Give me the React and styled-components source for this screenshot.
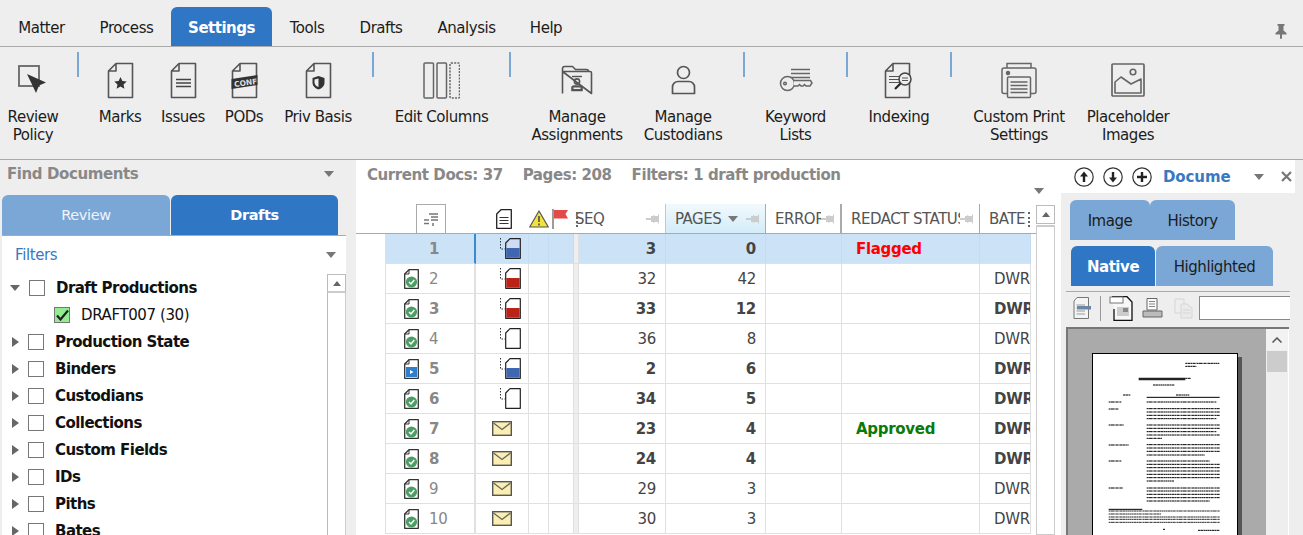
import React from "react";
import styled, { createGlobalStyle } from "styled-components";

const Global = createGlobalStyle`
  html, body { margin: 0; padding: 0; background: #fff; }
  * { box-sizing: border-box; }
`;

const FONT = `"DejaVu Sans", Verdana, sans-serif`;

const Page = styled.div`
  width: 1303px; height: 535px; overflow: hidden; display: flex; flex-direction: column;
  font-family: ${FONT}; font-size: 15px; color: #222; background: #eee;
`;

/* ---------- top tabs ---------- */
const TabBar = styled.div`
  height: 47px; flex: none; display: flex; align-items: flex-end; padding-left: 1px;
  border-bottom: 1px solid #aaa; background: #eee; position: relative;
`;
const TopTab = styled.div`
  width: ${p => p.$w}px; height: 39px; display: flex; align-items: center; justify-content: center;
  padding-top: 3px; letter-spacing: -0.45px; color: #1c1c1c;
  ${p => p.$active && `background:#2f76c4;color:#fff;font-weight:700;border-radius:6px 6px 0 0;letter-spacing:-0.5px;padding-top:2px;`}
`;
const PinSlot = styled.div`margin-left: auto; padding: 0 16px 7px 0; display: flex;`;

/* ---------- ribbon ---------- */
const Ribbon = styled.div`
  height: 113px; flex: none; display: flex; align-items: flex-start;
  border-bottom: 1px solid #aaa; background: #eee;
`;
const RibbonItem = styled.div`
  width: ${p => p.$w}px; flex: none; padding-top: 13px; display: flex; flex-direction: column; align-items: center;
`;
const IconBox = styled.div`height: 40px; display: flex; align-items: center; justify-content: center;`;
const RibbonLabel = styled.div`
  margin-top: 8px; text-align: center; line-height: 18px; white-space: nowrap; letter-spacing: -0.45px; color: #1c1c1c;
`;
const Sep = styled.div`
  width: 2px; height: 25px; flex: none; margin-top: 5px; margin-left: ${p => p.$ml || 0}px; background: #7ba7d6;
`;

/* ---------- main ---------- */
const Main = styled.div`flex: 1; min-height: 0; display: flex;`;

const LeftPanel = styled.div`width: 356px; flex: none; display: flex; flex-direction: column; background: #eee;`;
const PanelHead = styled.div`
  height: 35px; flex: none; display: flex; align-items: center; justify-content: space-between;
  padding: 0 22px 7px 7px; font-weight: 700; color: #888; letter-spacing: -0.4px;
`;
const Caret = styled.span`
  display: inline-block; width: 0; height: 0; border-left: 5px solid transparent; border-right: 5px solid transparent;
  border-top: 6px solid ${p => p.$c || "#777"};
`;
const SideTabs = styled.div`display: flex; height: 40px; flex: none; padding-left: 2px;`;
const SideTab = styled.div`
  width: ${p => p.$w}px; display: flex; align-items: center; justify-content: center;
  border-radius: 6px 6px 0 0; color: #fff; background: ${p => p.$active ? "#2f76c4" : "#7ba7d6"};
  font-weight: ${p => p.$active ? 700 : 400}; letter-spacing: -0.4px; margin-right: 1px; font-size: 14.5px;
  ${p => !p.$active && `color:#eef4fb;`}
`;
const FilterBox = styled.div`
  margin-left: 2px; width: 344px; flex: 1; min-height: 0; background: #fff; border-top: 1px solid #aaa;
  display: flex; flex-direction: column;
`;
const FilterHead = styled.div`
  height: 38px; flex: none; display: flex; align-items: center; justify-content: space-between;
  padding: 0 10px 0 13px; color: #3a78c2; letter-spacing: -0.4px;
`;
const TreeWrap = styled.div`display: flex; flex: 1; min-height: 0; overflow: hidden;`;
const Tree = styled.div`flex: 1; min-width: 0;`;
const TreeRow = styled.div`
  height: 27px; display: flex; align-items: center; padding-left: ${p => p.$child ? 52 : 9}px;
  font-weight: ${p => p.$child ? 400 : 700}; letter-spacing: ${p => p.$child ? "-0.4px" : "-0.55px"}; color: #111; white-space: nowrap;
`;
const Arrow = styled.span`
  width: 8px; height: 12px; flex: none; display: flex; align-items: center;
  ${p => p.$open
    ? `width:10px;height:0;border-left:5px solid transparent;border-right:5px solid transparent;border-top:6px solid #666;margin-left:-1px;`
    : `width:0;height:0;border-top:5px solid transparent;border-bottom:5px solid transparent;border-left:7px solid #666;margin-left:1px;`}
`;
const Check = styled.span`
  width: 16px; height: 16px; flex: none; margin-left: ${p => p.$child ? 0 : 9}px; margin-right: 11px;
  border: 1px solid #777; background: ${p => p.$on ? "#90ee90" : "#fff"}; display: flex; align-items: center; justify-content: center;
`;
const VScroll = styled.div`
  width: ${p => p.$w || 20}px; flex: none; display: flex; flex-direction: column;
  border-left: 1px solid #bbb; border-right: 1px solid #ccc; background: #fff; margin-top: ${p => p.$mt || 0}px;
`;
const ScrollBtn = styled.div`
  height: 19px; flex: none; display: flex; align-items: center; justify-content: center; border: 1px solid #bbb; margin: 0 -1px 0 -1px; border-bottom: 2px solid #ccc;
`;
const UpTri = styled.span`
  width: 0; height: 0; border-left: 4px solid transparent; border-right: 4px solid transparent; border-bottom: 5px solid #666;
`;

/* ---------- centre ---------- */
const Centre = styled.div`width: 705px; flex: none; background: #fff; display: flex; flex-direction: column;`;
const Info = styled.div`
  height: 44px; flex: none; display: flex; padding: 6px 0 0 11px; gap: 20px; font-weight: 700; color: #888; letter-spacing: -0.42px; white-space: nowrap; position: relative;
`;
const InfoCaret = styled.div`position: absolute; right: 17px; top: 20px;`;
const TableWrap = styled.div`flex: 1; min-height: 0; display: flex; overflow: hidden;`;
const Table = styled.div`width: 680px; flex: none;`;

const COLS = "29px 91px 53px 20px 25px 5px 87px 100px 76px 138px 51px";

const HeadRow = styled.div`
  display: grid; grid-template-columns: ${COLS}; height: 30px; border-bottom: 1px solid #aaa;
`;
const HeadCell = styled.div`
  grid-column: span ${p => p.$span || 1}; display: flex; align-items: center; justify-content: space-between; position: relative; min-width: 0;
  padding: 0 5px 0 ${p => p.$pl ?? 10}px; color: #555; letter-spacing: -0.5px; white-space: nowrap; overflow: hidden;
  border-right: ${p => p.$br ?? "1px solid #aaa"};
  ${p => p.$sorted && `background: linear-gradient(#f1f9fd, #d3ecf8); border-right-color:#aaa;`}
`;
const HeadIcon = styled.div`display: flex; align-items: center; justify-content: ${p => p.$j || "center"}; padding-left: ${p => p.$pl || 0}px; height: 29px;`;
const HeadText = styled.span`overflow: hidden; flex: 1; min-width: 0; display: block;`;
const Grip = styled.span`
  position: absolute; ${p => p.$right ? "right: 1px" : "left: 2px"}; top: 8px; width: 2px; height: 15px; border-left: 2px dotted #666;
`;
const CornerBtn = styled.div`
  width: 30px; height: 29px; margin-left: 31px; border: 1px solid #aaa; border-bottom: 0; display: flex; align-items: center; justify-content: center;
`;
const Row = styled.div`display: grid; grid-template-columns: ${COLS}; height: 30px;`;
const Blank = styled.div``;
const Cell = styled.div`
  display: flex; align-items: center; min-width: 0; overflow: hidden; white-space: nowrap; position: relative;
  border-right: ${p => p.$sel ? "1px solid #c4dcf2" : "1px solid #e0e0e0"};
  border-bottom: 1px solid #e0e0e0;
  background: ${p => p.$sel ? "#cce3f7" : p.$gap ? "#eee" : "#fff"};
  justify-content: ${p => p.$j || "flex-start"};
  padding: ${p => p.$pad || "0"};
  color: #444; letter-spacing: -0.3px;
  font-weight: ${p => p.$bold ? 700 : 400};
`;
const RowHead = styled(Cell)`
  border-left: 1px solid #e0e0e0; padding-left: 18px; gap: 10px; color: #888;
  border-right: ${p => p.$sel ? "2px solid #3a8ad0" : "2px solid #e0e0e0"};
`;
const RowNum = styled.span`display: inline-block; ${p => p.$indent && "margin-left: 25px;"}`;
const Status = styled.span`font-weight: 700; color: ${p => p.$c}; letter-spacing: -0.3px;`;
const TableScroll = styled.div`width: 19px; flex: none; margin-left: 0; margin-top: 1px; display: flex; flex-direction: column;`;
const TSBtn = styled.div`height: 19px; border: 1px solid #bbb; display: flex; align-items: center; justify-content: center; flex: none;`;
const TSTrack = styled.div`flex: 1; margin-top: 1px; border: 1px solid #ccc; border-top: 2px solid #ccc;`;

/* ---------- right ---------- */
const RightPanel = styled.div`width: 242px; flex: none; display: flex; flex-direction: column; background: #eee;`;
const RightHead = styled.div`
  height: 33px; width: 234px; flex: none; background: #fff; display: flex; align-items: center; padding-left: 13px; gap: 9px;
`;
const DocTitle = styled.div`font-weight: 700; color: #3a78c2; margin-left: 2px; width: 82px; letter-spacing: -0.1px; overflow: hidden;`;
const CloseX = styled.div`margin-left: 8px; display: flex;`;
const TabLine = styled.div`display: flex; height: 40px; flex: none; margin-top: ${p => p.$mt}px; padding-left: ${p => p.$pl}px;`;
const ViewTab = styled.div`
  width: ${p => p.$w}px; display: flex; align-items: center; justify-content: center; flex: none; letter-spacing: -0.45px;
  border-radius: 6px 6px 0 0; margin-right: ${p => p.$mr || 0}px; padding-top: 2px;
  background: ${p => p.$active ? "#2f76c4" : "#7ba7d6"}; color: ${p => p.$active ? "#fff" : "#1c1c1c"}; font-weight: ${p => p.$active ? 700 : 400};
`;
const Tools = styled.div`
  height: 36px; flex: none; margin: 5px 13px 0 5px; border-top: 1px solid #aaa; display: flex; align-items: center; padding: 0 0 3px 7px;
`;
const ToolSlot = styled.div`display: flex; align-items: center; margin-right: ${p => p.$mr || 0}px;`;
const ToolDiv = styled.div`width: 1px; height: 25px; background: #999; margin: 0 8px 0 9px;`;
const ToolInput = styled.div`flex: 1; height: 24px; background: #fff; border: 1px solid #888; border-right: 0; margin-left: 5px;`;
const Viewer = styled.div`flex: 1; min-height: 0; margin: 0 14px 0 5px; display: flex; border-top: 2px solid #777; overflow: hidden;`;
const ViewerCanvas = styled.div`
  flex: 1; background: #aaa; border-left: 2px solid #777; padding: 24px 0 0 24px; overflow: hidden;
`;
const DocPage = styled.div`
  width: 146px; height: 210px; background: #fff; border: 1px solid #000; border-width: 1px 1px 0 1px; box-shadow: 4px 4px 0 #555; display: flex;
`;
const ViewerScroll = styled.div`width: 23px; flex: none; background: #eee; border-right: 1px solid #fff; display: flex; flex-direction: column;`;
const VSBtn = styled.div`height: 21px; background: #f2f2f2; display: flex; align-items: center; justify-content: center; flex: none;`;
const VSThumb = styled.div`height: 21px; margin: 1px 1px 0 1px; background: #ccc; flex: none;`;

/* ---------- icons ---------- */
const S = "#555";
const Doc = ({ children }) => (
  <svg width="27" height="37" viewBox="0 0 27 37" fill="none">
    <path d="M9 1.5H25.5V35.5H1.5V9Z M9 1.5V9H1.5" stroke={S} strokeWidth="1.6" strokeLinejoin="round" />
    {children}
  </svg>
);
const ReviewIcon = () => (
  <svg width="30" height="30" viewBox="0 0 30 30" fill="none">
    <rect x="1" y="1" width="20" height="20" stroke="#666" strokeWidth="1.8" fill="#eee" />
    <path d="M9 9L28 17.5L21 20.5L18 28Z" fill="#333" />
  </svg>
);
const MarksIcon = () => <Doc><path d="M13.5 15l1.9 4 4.3.5-3.2 2.9.9 4.3-3.9-2.2-3.9 2.2.9-4.3-3.2-2.9 4.3-.5Z" fill="#333" /></Doc>;
const IssuesIcon = () => <Doc><path d="M6 17.5H21M6 21H21M6 24.5H21" stroke="#444" strokeWidth="1.6" /></Doc>;
const PodsIcon = () => (
  <Doc>
    <path d="M0.5 17L26.5 13V23L0.5 27Z" fill="#333" />
    <text x="3" y="23.6" fontSize="7.5" fontWeight="700" fill="#ddd" fontFamily={FONT} transform="rotate(-8 13 21)" letterSpacing="0">CONF</text>
  </Doc>
);
const PrivIcon = () => <Doc><path d="M13.5 14l6 2v4.5c0 3.5-2.5 5.8-6 7-3.500-1.200-6-3.500-6-7V16Z" fill="#333" /><path d="M13.5 16.500v8.500c-2.500-1-4-2.500-4-4.800V17.500Z" fill="#eee" /></Doc>;
const ColumnsIcon = () => (
  <svg width="37" height="37" viewBox="0 0 37 37" fill="none" stroke="#666" strokeWidth="1.5">
    <rect x="1" y="1" width="9.500" height="35" rx="1" />
    <rect x="14" y="1" width="9.500" height="35" rx="1" />
    <rect x="27" y="1" width="9.500" height="35" rx="1" strokeDasharray="2 1.200" />
  </svg>
);
const AssignIcon = () => (
  <svg width="32" height="30" viewBox="0 0 32 30" fill="none" stroke="#555" strokeWidth="1.6">
    <path d="M1.500 28.500V3.500a2 2 0 0 1 2-2h8l3 3h11a2 2 0 0 1 2 2M1.500 6.500H29a1.500 1.500 0 0 1 1.500 1.500V28.500Z" strokeLinejoin="round"/>
    <path d="M11 11.500H21" strokeWidth="1.400" />
    <circle cx="16" cy="16.500" r="2.600" />
    <path d="M11 25.500v-2.500a2 2 0 0 1 2-2h6a2 2 0 0 1 2 2v2.500Z" fill="#555" stroke="#555" />
    <rect x="12.500" y="22.500" width="7" height="1.500" fill="#eee" stroke="none" />
  </svg>
);
const PersonIcon = () => (
  <svg width="25" height="30" viewBox="0 0 25 30" fill="none" stroke="#555" strokeWidth="1.7">
    <circle cx="12.500" cy="7.500" r="6" />
    <path d="M1.500 28.500V22a5.500 5.500 0 0 1 5.500-5.500h11a5.500 5.500 0 0 1 5.500 5.500v6.500Z" strokeLinejoin="round" />
  </svg>
);
const KeyIcon = () => (
  <svg width="34" height="25" viewBox="0 0 34 25" fill="none" stroke="#666" strokeWidth="1.500">
    <path d="M12 1.500H31M12 5.500H31M12 9.500H31" />
    <circle cx="8.500" cy="15.500" r="7" fill="#eee" />
    <circle cx="6" cy="15.500" r="1.300" />
    <path d="M15 12.500H31.500L33 15l-2 3H27l-1.500-1.500L24 18h-2l-1.500-1.500L19 18h-4" fill="#eee" />
  </svg>
);
const IndexIcon = () => (
  <svg width="30" height="37" viewBox="0 0 30 37" fill="none">
    <path d="M9 1.500H25.500V35.500H1.500V9Z M9 1.500V9H1.500" stroke={S} strokeWidth="1.600" strokeLinejoin="round" />
    <path d="M5 14.500H19M5 17.500H19M5 20.500H17" stroke="#555" strokeWidth="1.200" />
    <circle cx="21" cy="17" r="6" fill="#eee" stroke="#444" strokeWidth="1.500" />
    <path d="M18 16H24M18 18.500H24" stroke="#555" strokeWidth="1" />
    <path d="M16.500 21.500L11 27" stroke="#222" strokeWidth="2.200" />
  </svg>
);
const PrinterIcon = () => (
  <svg width="36" height="37" viewBox="0 0 36 37" fill="none" stroke="#666" strokeWidth="1.500">
    <path d="M6 6V1.500H30V6" />
    <path d="M6 31.500H3a2 2 0 0 1-2-2V8a2 2 0 0 1 2-2h30a2 2 0 0 1 2 2v21.500a2 2 0 0 1-2 2h-3" />
    <circle cx="7" cy="11" r="1.500" fill="#666" />
    <rect x="6.500" y="15" width="23" height="20.500" rx="1" fill="#eee" />
    <path d="M9.500 20H26.500M9.500 23.500H26.500M9.500 27H26.500M9.500 30.500H26.500" />
  </svg>
);
const ImageIcon = () => (
  <svg width="34" height="34" viewBox="0 0 34 34" fill="none" stroke="#666">
    <rect x="1" y="1" width="32" height="32" rx="1" strokeWidth="1.700" />
    <circle cx="22" cy="9" r="2.800" strokeWidth="1.600" />
    <path d="M4 30V19L10 14L20 21L30 16V30Z" strokeWidth="1.600" strokeLinejoin="round" />
  </svg>
);
const PinTop = () => (
  <svg width="12" height="15" viewBox="0 0 12 15"><path d="M2.500 0H9.500V1.500L8.500 2V6.500L11.500 9V10.500H7V14.500L6 15 5 14.500V10.500H.5V9L3.500 6.500V2L2.500 1.500Z" fill="#777" /></svg>
);
const HPin = () => (
  <svg width="14" height="10" viewBox="0 0 14 10" style={{ flex: "none" }}><path d="M0 4H5V2H7V1L9 2H12V0.500H13V9.500H12V8H9L7 9V8H5V6H0Z" fill="#ccc" /></svg>
);
const CheckMark = () => (
  <svg width="13" height="12" viewBox="0 0 13 12"><path d="M1 6.500L4.500 10.500L12 1.500" fill="none" stroke="#222" strokeWidth="2.200" /></svg>
);
const RowDoc = ({ play }) => (
  <svg width="15" height="20" viewBox="0 0 15 20" style={{ flex: "none" }}>
    <path d="M5 .700H14.300V19.300H.700V5Z" fill="#fff" stroke="#333" strokeWidth="1.300" strokeLinejoin="round" />
    <path d="M5 .700V5H.700" fill="none" stroke="#333" strokeWidth="1" />
    {play ? (
      <>
        <rect x="2" y="8" width="11" height="10" fill="#2f7ec9" />
        <path d="M6 11L9.500 13L6 15Z" fill="#fff" />
      </>
    ) : (
      <>
        <circle cx="7.500" cy="13" r="5.600" fill="#4a9e63" />
        <path d="M5 13L7 15L10.300 11" fill="none" stroke="#fff" strokeWidth="1.500" />
      </>
    )}
  </svg>
);
const FileMark = ({ fill, top }) => (
  <svg width="21" height="21" viewBox="0 0 21 21" style={{ flex: "none" }}>
    <path d="M.500 0V11H5" fill="none" stroke="#333" strokeWidth="1" strokeDasharray="1.500 1.500" />
    <path d="M10 .700H20.300V20.300H5.700V5Z" fill={top || "#fff"} stroke="#222" strokeWidth="1.200" strokeLinejoin="round" />
    {fill && <path d="M6.300 10H19.700V19.700H6.300Z" fill={fill} />}
  </svg>
);
const Envelope = () => (
  <svg width="20" height="15" viewBox="0 0 20 15" style={{ flex: "none" }}>
    <rect x=".700" y=".700" width="18.600" height="13.600" fill="#fbeeb0" stroke="#555" strokeWidth="1.400" />
    <path d="M1.500 2L10 8.500L18.500 2" fill="none" stroke="#666" strokeWidth="1.300" />
  </svg>
);
const HeadDoc = () => (
  <svg width="16" height="20" viewBox="0 0 16 20">
    <path d="M5 .700H15.300V19.300H.700V5Z" fill="#fff" stroke="#222" strokeWidth="1.300" strokeLinejoin="round" />
    <path d="M3.500 8.500H12.500M3.500 11.500H12.500M3.500 14.500H12.500" stroke="#333" strokeWidth="1.200" />
  </svg>
);
const WarnIcon = () => (
  <svg width="20" height="18" viewBox="0 0 20 18">
    <path d="M10 1L19.300 17H.700Z" fill="#f2e23c" stroke="#555" strokeWidth="1.200" strokeLinejoin="round" />
    <path d="M10 6V12M10 13.500V15.500" stroke="#555" strokeWidth="1.700" />
  </svg>
);
const FlagIcon = () => (
  <svg width="17" height="20" viewBox="0 0 17 20">
    <path d="M1 0V20" stroke="#666" strokeWidth="1.300" />
    <path d="M2 1H16L13.500 5L16 9.500H2Z" fill="#e34b4b" />
  </svg>
);
const SortLines = () => (
  <svg width="14" height="13" viewBox="0 0 14 13" fill="none" stroke="#777" strokeWidth="1.500">
    <path d="M5 1H14M7 4H14M0 7H5M7 7H14M0 10.500H5M9 10V13" />
  </svg>
);
const RoundBtn = ({ d }) => (
  <svg width="20" height="20" viewBox="0 0 20 20" style={{ flex: "none" }}>
    <circle cx="10" cy="10" r="9.200" fill="#fff" stroke="#333" strokeWidth="1.200" />
    <path d={d} fill="#222" />
  </svg>
);
const CloseIcon = () => (
  <svg width="11" height="11" viewBox="0 0 11 11"><path d="M1 1L10 10M10 1L1 10" stroke="#777" strokeWidth="2.200" /></svg>
);
const Chevron = () => (
  <svg width="10" height="6" viewBox="0 0 10 6"><path d="M.500 5.500L5 1L9.500 5.500" fill="none" stroke="#555" strokeWidth="1.500" /></svg>
);
const Tool1 = () => (
  <svg width="18" height="22" viewBox="0 0 18 22">
    <path d="M4 .500H15.500V21.500H1V4Z" fill="#f4f4f4" stroke="#777" />
    <path d="M3.500 8H12M3.500 11H12M3.500 14H12M3.500 17H12" stroke="#999" />
    <rect x="4" y="9" width="14" height="3.500" fill="#6b87a8" />
  </svg>
);
const Tool2 = () => (
  <svg width="24" height="25" viewBox="0 0 24 25">
    <path d="M3 .700H18L23 6V24.300H5V13" fill="#f7f7f7" stroke="#111" strokeWidth="1.300" />
    <rect x="1" y="1" width="13" height="6" fill="#fff" stroke="#777" />
    <rect x="8" y="11" width="12" height="9" fill="#ccc" />
    <rect x="14" y="12" width="5" height="4" fill="#888" />
  </svg>
);
const Tool3 = () => (
  <svg width="21" height="20" viewBox="0 0 21 20">
    <path d="M5 .500H15V12H5Z" fill="#fafafa" stroke="#666" />
    <path d="M7 3.500H13M7 6H13M7 8.500H13" stroke="#888" />
    <path d="M1 13h19v6H1Z" fill="#bbb" stroke="#666" />
  </svg>
);
const Tool4 = () => (
  <svg width="20" height="21" viewBox="0 0 20 21" opacity=".45">
    <path d="M1 1H10V15H1Z" fill="#eee" stroke="#bbb" />
    <path d="M7 6H13L18 10V20H7Z" fill="#e6e6e6" stroke="#bbb" />
    <path d="M9 12H16M9 15H16" stroke="#bbb" />
  </svg>
);

const D = "6 1 9 1 4 1 7 1 3 1";
const body = [
  [171, 485], [191, 495], [201, 495], [211, 495], [221, 485],
  [240, 495], [250, 495], [260, 485], [270, 495], [280, 322],
  [299, 495], [309, 495], [319, 495], [330, 450],
  [348, 465], [358, 495], [368, 495], [378, 495], [388, 495], [398, 495], [408, 358],
  [429, 495], [438, 495], [448, 495], [458, 495], [468, 465],
];
const foot = [[498, 495], [507, 320], [516, 495], [523, 495], [532, 495]];
const terms = [[171, 200], [192, 192], [240, 207], [300, 222], [348, 200], [429, 205]];
const PageContent = () => (
  <svg width="144" height="210" viewBox="115 27 432 630" stroke="#000" fill="none">
    <g strokeWidth="3" strokeDasharray={D}>
      <path d="M392 55H495M392 64H426M392 100H408M295 120H360M205 150H228M364 150H405" />
      {terms.map(([y, x], i) => <path key={i} d={`M162 ${y}H${x}`} />)}
      {body.map(([y, x], i) => <path key={i} d={`M276 ${y}H${x}`} />)}
      {foot.map(([y, x], i) => <path key={i} d={`M162 ${y}H${x}`} strokeWidth="2.500" />)}
      <path d="M325 553H332M430 556H495" />
    </g>
    <path d="M252 102H392" strokeWidth="7" stroke="#222" />
    <path d="M276 157H495M162 493H263" strokeWidth="3" />
  </svg>
);

/* ---------- data ---------- */
const tabs = [["Matter", 81], ["Process", 89], ["Settings", 101, true], ["Tools", 70], ["Drafts", 78], ["Analysis", 93], ["Help", 66]];
const ribbon = [
  ["Review\nPolicy", 66, <ReviewIcon />], { sep: 11 },
  ["Marks", 82, <MarksIcon />], ["Issues", 44, <IssuesIcon />], ["PODs", 78, <PodsIcon />], ["Priv Basis", 70, <PrivIcon />], { sep: 19 },
  ["Edit Columns", 135, <ColumnsIcon />], { sep: 0 },
  ["Manage\nAssignments", 132, <AssignIcon />], ["Manage\nCustodians", 80, <PersonIcon />], { sep: 20 },
  ["Keyword\nLists", 101, <KeyIcon />], { sep: 0 },
  ["Indexing", 102, <IndexIcon />], { sep: 0 },
  ["Custom Print\nSettings", 134, <PrinterIcon />], ["Placeholder\nImages", 84, <ImageIcon />],
];
const tree = ["Production State", "Binders", "Custodians", "Collections", "Custom Fields", "IDs", "Piths", "Bates"];
const RED = "#bb2218", BLUE = "#3f66b0";
const rows = [
  { n: 1, sel: true, bold: true, mark: <FileMark fill={BLUE} top="#cfdcf3" />, seq: 3, pg: 0, status: ["Flagged", "#f00"] },
  { n: 2, mark: <FileMark fill={RED} />, seq: 32, pg: 42, bates: "DWR" },
  { n: 3, bold: true, mark: <FileMark fill={RED} />, seq: 33, pg: 12, bates: "DWR" },
  { n: 4, mark: <FileMark />, seq: 36, pg: 8, bates: "DWR" },
  { n: 5, bold: true, play: true, mark: <FileMark fill={BLUE} />, seq: 2, pg: 6, bates: "DWR" },
  { n: 6, bold: true, mark: <FileMark />, seq: 34, pg: 5, bates: "DWR" },
  { n: 7, bold: true, env: true, seq: 23, pg: 4, status: ["Approved", "#0a7a0a"], bates: "DWR" },
  { n: 8, bold: true, env: true, seq: 24, pg: 4, bates: "DWR" },
  { n: 9, env: true, seq: 29, pg: 3, bates: "DWR" },
  { n: 10, env: true, seq: 30, pg: 3, bates: "DWR" },
];

const Label = ({ text }) => text.split("\n").map((t, i) => <div key={i}>{t}</div>);

export default function App() {
  return (
    <Page>
      <Global />
      <TabBar>
        {tabs.map(([t, w, a]) => <TopTab key={t} $w={w} $active={a}>{t}</TopTab>)}
        <PinSlot><PinTop /></PinSlot>
      </TabBar>
      <Ribbon>
        {ribbon.map((r, i) => r.sep !== undefined
          ? <Sep key={i} $ml={r.sep} />
          : (
            <RibbonItem key={i} $w={r[1]}>
              <IconBox>{r[2]}</IconBox>
              <RibbonLabel><Label text={r[0]} /></RibbonLabel>
            </RibbonItem>
          ))}
      </Ribbon>
      <Main>
        <LeftPanel>
          <PanelHead><span>Find Documents</span><Caret /></PanelHead>
          <SideTabs>
            <SideTab $w={168}>Review</SideTab>
            <SideTab $w={167} $active>Drafts</SideTab>
          </SideTabs>
          <FilterBox>
            <FilterHead><span>Filters</span><Caret /></FilterHead>
            <TreeWrap>
              <Tree>
                <TreeRow><Arrow $open /><Check /><span>Draft Productions</span></TreeRow>
                <TreeRow $child><Check $child $on><CheckMark /></Check><span>DRAFT007 (30)</span></TreeRow>
                {tree.map(t => <TreeRow key={t}><Arrow /><Check /><span>{t}</span></TreeRow>)}
              </Tree>
              <VScroll $w={19}>
                <ScrollBtn><UpTri /></ScrollBtn>
              </VScroll>
            </TreeWrap>
          </FilterBox>
        </LeftPanel>

        <Centre>
          <Info>
            <span>Current Docs: 37</span>
            <span>Pages: 208</span>
            <span>Filters: 1 draft production</span>
            <InfoCaret><Caret /></InfoCaret>
          </Info>
          <TableWrap>
            <Table>
              <HeadRow>
                <Blank />
                <HeadIcon $j="flex-start"><CornerBtn><SortLines /></CornerBtn></HeadIcon>
                <HeadIcon $j="flex-start" $pl={20}><HeadDoc /></HeadIcon>
                <HeadIcon><WarnIcon /></HeadIcon>
                <HeadIcon $j="flex-start" $pl={3}><FlagIcon /></HeadIcon>
                <HeadCell $span={2} $pl={1} $br="1px solid #9fd4ea"><Grip /><HeadText>SEQ</HeadText><HPin /></HeadCell>
                <HeadCell $sorted $pl={9}>
                  <HeadText>PAGES</HeadText><Caret style={{ marginRight: 8 }} /><HPin />
                </HeadCell>
                <HeadCell $pl={9} $br="2px solid #aaa"><HeadText>ERRORS</HeadText><HPin /></HeadCell>
                <HeadCell $pl={9}><HeadText>REDACT STATUS</HeadText><HPin /></HeadCell>
                <HeadCell $pl={9} $br="0"><Grip $right /><HeadText>BATES</HeadText></HeadCell>
              </HeadRow>
              {rows.map(r => (
                <Row key={r.n}>
                  <Blank />
                  <RowHead $sel={r.sel} $bold={r.bold}>
                    {r.sel ? <RowNum $indent>{r.n}</RowNum> : <><RowDoc play={r.play} /><RowNum>{r.n}</RowNum></>}
                  </RowHead>
                  <Cell $sel={r.sel} $pad={r.env ? "0 0 0 16px" : "0 0 0 24px"}>{r.env ? <Envelope /> : r.mark}</Cell>
                  <Cell $sel={r.sel} />
                  <Cell $sel={r.sel} />
                  <Cell $gap />
                  <Cell $sel={r.sel} $bold={r.bold} $j="flex-end" $pad="0 9px 0 0">{r.seq}</Cell>
                  <Cell $sel={r.sel} $bold={r.bold} $j="flex-end" $pad="0 9px 0 0">{r.pg}</Cell>
                  <Cell $sel={r.sel} />
                  <Cell $sel={r.sel} $pad="0 0 0 14px">{r.status && <Status $c={r.status[1]}>{r.status[0]}</Status>}</Cell>
                  <Cell $sel={r.sel} $bold={r.bold} $pad="0 0 0 14px">{r.bates}</Cell>
                </Row>
              ))}
            </Table>
            <TableScroll>
              <TSBtn><UpTri /></TSBtn>
              <TSTrack />
            </TableScroll>
          </TableWrap>
        </Centre>

        <RightPanel>
          <RightHead>
            <RoundBtn d="M10 4.500L14 9.500H11.200V15H8.800V9.500H6Z" />
            <RoundBtn d="M10 15.500L14 10.500H11.200V5H8.800V10.500H6Z" />
            <RoundBtn d="M8.800 5H11.200V8.800H15V11.200H11.200V15H8.800V11.200H5V8.800H8.800Z" />
            <DocTitle>Docume</DocTitle>
            <Caret />
            <CloseX><CloseIcon /></CloseX>
          </RightHead>
          <TabLine $mt={7} $pl={9}>
            <ViewTab $w={80}>Image</ViewTab>
            <ViewTab $w={85}>History</ViewTab>
          </TabLine>
          <TabLine $mt={6} $pl={10}>
            <ViewTab $w={84} $mr={1} $active>Native</ViewTab>
            <ViewTab $w={117}>Highlighted</ViewTab>
          </TabLine>
          <Tools>
            <ToolSlot><Tool1 /></ToolSlot>
            <ToolDiv />
            <ToolSlot $mr={9}><Tool2 /></ToolSlot>
            <ToolSlot $mr={11}><Tool3 /></ToolSlot>
            <ToolSlot><Tool4 /></ToolSlot>
            <ToolInput />
          </Tools>
          <Viewer>
            <ViewerCanvas>
              <DocPage><PageContent /></DocPage>
            </ViewerCanvas>
            <ViewerScroll>
              <VSBtn><Chevron /></VSBtn>
              <VSThumb />
            </ViewerScroll>
          </Viewer>
        </RightPanel>
      </Main>
    </Page>
  );
}
